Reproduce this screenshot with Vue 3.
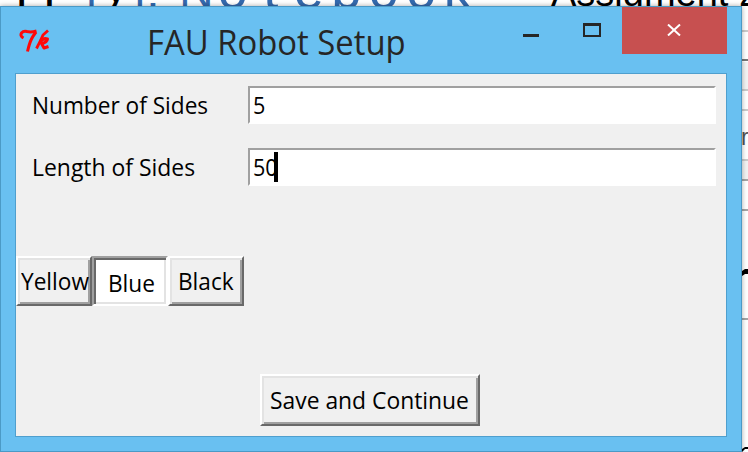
<script setup>
import { ref } from 'vue'

const fields = ref([
  { label: 'Number of Sides', value: '5', focused: false, cls: 'number' },
  { label: 'Length of Sides', value: '50', focused: true, cls: 'length' }
])
const colors = [
  { name: 'Yellow', cls: 'yellow' },
  { name: 'Blue', cls: 'blue' },
  { name: 'Black', cls: 'black' }
]
const selected = ref('Blue')
</script>

<template>
  <main class="desktop">
    <div class="page-behind">
      <span class="bg-text bg-ip">IP</span>
      <span class="bg-text bg-bracket">[</span>
      <span class="bg-text bg-y">y</span>
      <span class="bg-text bg-close">]:</span>
      <span class="bg-text bg-notebook"><span class="n">N</span><span class="ot">ot</span><span class="ebook">ebook</span></span>
      <span class="bg-text bg-assign">Assigment 2</span>
      <svg class="bg-side" width="6" height="452" viewBox="0 0 6 452">
        <rect y="62" width="6" height="28" fill="#f3f3f3" />
        <rect y="160" width="6" height="20" fill="#f2f2f2" />
        <path d="M0 31h6M0 90h6M0 110h6M0 160h6" stroke="#cbcbcb" stroke-width="2" />
        <path d="M0 60h6" stroke="#777" stroke-width="2" />
        <path d="M0 180h6M0 210h6M0 319h6" stroke="#a5a5a5" stroke-width="2" />
        <path d="M0 271l3-2h3v5h-3l-3 2zM0 449l3-2h3v2h-3l-3 3z" fill="#000" />
      </svg>
      <span class="bg-text bg-r">r</span>
    </div>
    <section class="window">
      <header class="titlebar">
        <svg class="tk" width="32" height="26" viewBox="0 0 32 26">
          <g fill="none" stroke="#ff0808" stroke-linejoin="round">
            <path d="M4.500 10Q.8 8 2.500 5Q4.500 2.500 8 3.500Q12 4.500 17.500 3" stroke-width="3" />
            <path d="M17 4Q14 8 12.500 11Q10.500 15 8.500 23.500" stroke-width="3" />
            <path d="M29 2.500L24 7Q21.500 13 17.500 20.500" stroke-width="2.800" />
            <path d="M21 14Q24 9.500 28.500 11Q28 14.500 22.500 15.500L25 20L29.500 18.500" stroke-width="3" />
          </g>
        </svg>
        <h1 class="title"><span>FAU Robot Setup</span></h1>
        <div class="controls">
          <svg width="112" height="46" viewBox="0 0 112 46">
            <rect x="13" y="27" width="16" height="3" fill="#262626" />
            <path d="M73 16h18v14h-18zM75 19v9h14v-9z" fill="#262626" fill-rule="evenodd" />
          </svg>
          <button class="close" aria-label="Close">
            <svg width="14" height="12" viewBox="0 0 14 12"><path d="M1 .5L13 11.500M13 .5L1 11.500" stroke="#fff" stroke-width="2" /></svg>
          </button>
        </div>
      </header>
      <div class="client">
        <div v-for="f in fields" :key="f.label" class="field">
          <label :class="['label', f.cls]"><span>{{ f.label }}</span></label>
          <div class="entry"><span class="value">{{ f.value }}</span><i v-if="f.focused" class="caret"></i></div>
        </div>
        <div class="choices">
          <button v-for="c in colors" :key="c.name" :class="['tk-button', c.cls, { sunken: selected === c.name }]" @click="selected = c.name"><span>{{ c.name }}</span></button>
        </div>
        <button class="tk-button save"><span>Save and Continue</span></button>
      </div>
    </section>
  </main>
</template>

<style>
body { margin: 0; overflow: hidden; }
</style>
<style scoped>
* { box-sizing: border-box; }
.desktop { position: relative; width: 748px; height: 452px; padding-top: 6px; overflow: hidden; background: #fff; font-family: "Open Sans", sans-serif; }
.page-behind { position: absolute; inset: 0; overflow: hidden; }
.bg-text { position: absolute; top: -32px; white-space: pre; font-size: 48px; line-height: 1; font-family: "Liberation Sans", sans-serif; }
.bg-ip { left: 15px; letter-spacing: 15px; }
.bg-bracket { left: 86px; color: #356aae; }
.bg-y { left: 104px; top: -38px; }
.bg-close { left: 132px; letter-spacing: 1px; color: #356aae; }
.bg-notebook { left: 179px; top: -38px; color: #356aae; }
.n { letter-spacing: 4px; }
.ot { font-size: 54px; letter-spacing: 15.500px; }
.ebook { font-size: 54px; letter-spacing: 7.500px; }
.bg-assign { left: 551px; top: -26px; font-size: 38px; }
.bg-side { position: absolute; left: 742px; top: 0; }
.bg-r { left: 741px; top: 126px; font-size: 23px; color: #555; }
.window { position: relative; width: 742px; height: 446px; padding: 0 14px 14px; border: 1px solid #4b9ac6; background: #69c0f1; box-shadow: 0 0 5px rgba(0,0,0,.35); }
.titlebar { display: flex; height: 66px; }
.tk { margin: 21px 0 0 4px; }
.title { width: 259px; height: 40px; margin: 15px 0 0 96px; font-size: 34px; line-height: 40px; font-weight: 400; color: #262626; white-space: nowrap; }
.title span { display: inline-block; transform-origin: 0 50%; transform: scaleX(.966); }
.controls { display: flex; margin-left: 104px; }
.close { display: flex; width: 105px; height: 47px; padding: 17px 0 0 45px; border: 0; background: #c75050; }
.client { width: 712px; height: 364px; padding: 12px 10px 0 0; border: 1px solid #4f9fce; background: #f0f0f0; font-size: 24px; }
.field { display: flex; height: 38px; margin-bottom: 24px; }
.label { width: 232px; padding-left: 16px; line-height: 38px; white-space: nowrap; }
.label span, .value, .tk-button span { display: inline-block; transform-origin: 0 50%; transform: scaleX(.943); }
.label.length span { transform: scaleX(.955); }
.entry { display: flex; width: 468px; height: 38px; border-top: 2px solid #a0a0a0; border-left: 2px solid #a0a0a0; border-right: 2px solid #fff; border-bottom: 2px solid #fff; background: #fff; line-height: 34px; padding-left: 3px; }
.value { transform: scaleX(.9); }
.caret { width: 4px; height: 30px; margin: 2px 0 0 -6px; background: #000; z-index: 1; }
.choices { display: flex; margin-top: 70px; }
.tk-button { display: flex; height: 50px; padding: 0 0 0 4px; border: 2px solid; border-color: #fff #696969 #696969 #fff; background: #f0f0f0; box-shadow: inset 2px 2px #e3e3e3, inset -2px -2px #a0a0a0; font: 24px/46px "Open Sans", sans-serif; color: #000; white-space: nowrap; }
.yellow { width: 76px; padding-left: 3px; }
.blue { width: 76px; }
.black { width: 76px; padding-left: 8px; }
.sunken { padding: 2px 0 0 14px; border-color: #a0a0a0 #fff #fff #a0a0a0; background: #fff; box-shadow: inset 2px 2px #696969, inset -2px -2px #e3e3e3; }
.save { width: 220px; height: 52px; margin: 68px 0 0 244px; padding-left: 8px; line-height: 47px; }
.tk-button.save span { transform: scaleX(.952); }
</style>
